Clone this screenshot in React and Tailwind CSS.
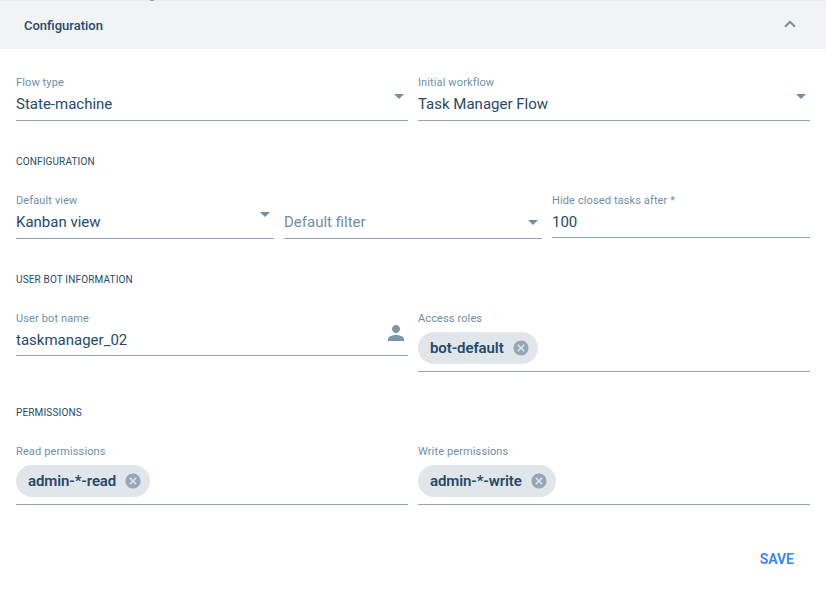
const labelClass = "block h-[17px] pt-px text-[11px] leading-4 tracking-[0.12px] text-[#718ea5] whitespace-nowrap";

function Field({ label, height = "h-[47px]", icon, children }) {
  return (
    <div className={"relative min-w-0 flex-1 border-b border-[#8fa6b9] " + height}>
      <span className={labelClass}>{label}</span>
      {children}
      {icon}
    </div>
  );
}

function Value({ children, muted }) {
  return (
    <div className={"mt-px text-[15px] leading-6 whitespace-nowrap " + (muted ? "text-[#718ea5]" : "text-[#27496d]")}>
      {children}
    </div>
  );
}

function Caret({ className = "top-5" }) {
  return (
    <svg className={"absolute right-1 " + className} width="10" height="5" viewBox="0 0 10 5" fill="#718ea5">
      <path d="M0 0h10L5 5z" />
    </svg>
  );
}

function Chip({ children }) {
  return (
    <div className="mt-[-2px] inline-flex h-8 items-center gap-2 rounded-full bg-[#e0e6ea] pr-2 pl-3 text-[15px] leading-6 font-semibold tracking-[-0.1px] whitespace-nowrap text-[#27496d]">
      <span>{children}</span>
      <svg width="18" height="18" viewBox="0 0 24 24" fill="#94a7b8">
        <path d="M12 2C6.47 2 2 6.47 2 12s4.47 10 10 10 10-4.47 10-10S17.53 2 12 2zm5 13.59L15.59 17 12 13.41 8.41 17 7 15.59 10.59 12 7 8.41 8.41 7 12 10.59 15.59 7 17 8.41 13.41 12 17 15.59z" />
      </svg>
    </div>
  );
}

function Section({ children }) {
  return <h2 className="mt-[33px] text-[10px] leading-4 tracking-[0.15px] text-[#27496d]">{children}</h2>;
}

function PersonIcon() {
  return (
    <svg className="absolute top-[11px] right-0" width="24" height="24" viewBox="0 0 24 24" fill="#7b95a9">
      <path d="M12 12c2.21 0 4-1.79 4-4s-1.79-4-4-4-4 1.79-4 4 1.79 4 4 4zm0 2c-2.67 0-8 1.34-8 4v2h16v-2c0-2.66-5.33-4-8-4z" />
    </svg>
  );
}

export default function App() {
  return (
    <div className="h-[601px] overflow-hidden bg-white font-[Roboto,sans-serif]">
      <header className="relative flex h-[49px] items-center justify-between border-t border-[#e9ecef] bg-[#f1f3f5] pr-[30px] pl-6">
        <span className="absolute -top-px left-[150px] h-px w-1 bg-[#8fa6b9]" />
        <h1 className="pt-0.5 text-[13px] leading-5 font-medium text-[#27496d]">Configuration</h1>
        <svg className="mb-[2px]" width="12" height="8" viewBox="0 0 12 8" fill="none" stroke="#718ea5" strokeWidth="2">
          <path d="M1 6.8 6 1.8l5 5" />
        </svg>
      </header>
      <main className="px-4 pt-[25px]">
        <div className="flex gap-2.5">
          <Field label="Flow type" icon={<Caret />}><Value>State-machine</Value></Field>
          <Field label="Initial workflow" icon={<Caret />}><Value>Task Manager Flow</Value></Field>
        </div>
        <Section>CONFIGURATION</Section>
        <div className="mt-[22px] flex items-start gap-2.5">
          <Field label="Default view" icon={<Caret />}><Value>Kanban view</Value></Field>
          <Field label="" icon={<Caret className="top-7" />}><Value muted>Default filter</Value></Field>
          <Field label="Hide closed tasks after *" height="h-[46px]"><Value>100</Value></Field>
        </div>
        <Section>USER BOT INFORMATION</Section>
        <div className="mt-[22px] flex items-start gap-2.5">
          <Field label="User bot name" height="h-[46px]" icon={<PersonIcon />}><Value>taskmanager_02</Value></Field>
          <Field label="Access roles" height="h-[62px]"><div className="pt-[7px]"><Chip>bot-default</Chip></div></Field>
        </div>
        <Section>PERMISSIONS</Section>
        <div className="mt-[22px] flex gap-2.5">
          <Field label="Read permissions" height="h-[62px]"><div className="pt-[7px]"><Chip>admin-*-read</Chip></div></Field>
          <Field label="Write permissions" height="h-[62px]"><div className="pt-[7px]"><Chip>admin-*-write</Chip></div></Field>
        </div>
        <div className="mt-[42px] flex justify-end pr-4">
          <button className="text-sm leading-6 font-semibold text-[#3486f5]">SAVE</button>
        </div>
      </main>
    </div>
  );
}
